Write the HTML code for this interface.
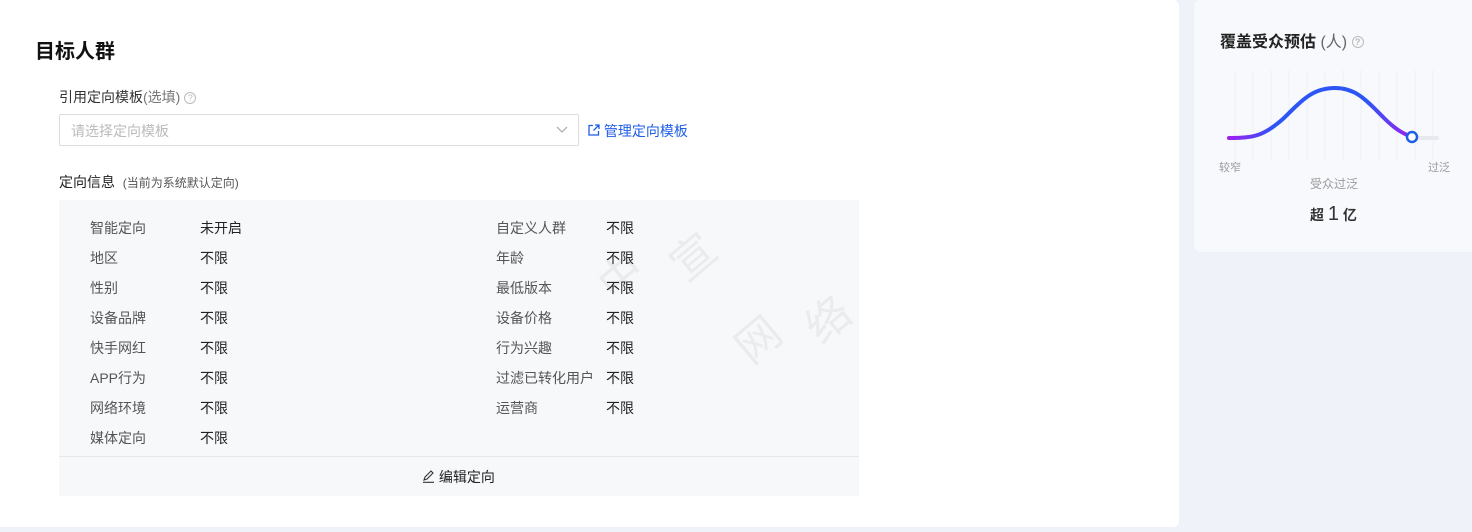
<!DOCTYPE html>
<html><head><meta charset="utf-8"><style>
*{margin:0;padding:0;box-sizing:border-box}
body{width:1472px;height:532px;background:#f0f2fa;font-family:"Liberation Sans","Noto Sans CJK SC",sans-serif;position:relative;overflow:hidden;color:#333}
.main{position:absolute;left:0;top:0;width:1179px;height:527px;background:#fff;border-radius:0 6px 6px 0}
.abs{position:absolute;white-space:nowrap}
.side{position:absolute;left:1194px;top:0;width:278px;height:252px;background:#f8f9fd;border-radius:6px 0 0 6px}
.q{display:inline-block;width:12px;height:12px;border:1px solid #bbb;border-radius:50%;font-size:9px;line-height:10px;text-align:center;color:#bbb;vertical-align:1px}
.box{position:absolute;left:59px;top:200px;width:800px;height:296px;background:#f7f8fa}
.row{position:absolute;font-size:14px;line-height:16px}
.l{color:#555}.v{color:#222}
.wm{position:absolute;font-size:44px;color:rgba(0,0,0,0.05);transform:rotate(-40deg)}
</style></head><body>
<div class="main">
<div class="abs" style="left:35px;top:35px;font-size:20px;font-weight:bold;color:#111">目标人群</div>
<div class="abs" style="left:59px;top:87px;font-size:14px;color:#333">引用定向模板<span style="color:#777">(选填)</span> <span class="q">?</span></div>
<div class="abs" style="left:59px;top:114px;width:520px;height:32px;border:1px solid #ddd;border-radius:2px;font-size:14px;color:#bbb;padding:6px 11px">请选择定向模板
<svg style="position:absolute;right:10px;top:11px" width="12" height="8" viewBox="0 0 12 8"><path d="M1 1l5 5 5-5" fill="none" stroke="#aaa" stroke-width="1.2"/></svg></div>
<div class="abs" style="left:587px;top:121px;font-size:14px;color:#1f5ee8">
<svg width="13" height="13" viewBox="0 0 13 13" style="vertical-align:-1px"><path d="M6 1.5H2v9.5h9.5V7M8 1h4v4M12 1L6.5 6.5" fill="none" stroke="#1f5ee8" stroke-width="1.3"/></svg> 管理定向模板</div>
<div class="abs" style="left:59px;top:172px;font-size:14px;color:#222">定向信息 &nbsp;<span style="font-size:12px;color:#555">(当前为系统默认定向)</span></div>
<div class="box">
<div class="row l" style="left:31px;top:20px">智能定向</div><div class="row v" style="left:141px;top:20px">未开启</div>
<div class="row l" style="left:31px;top:50px">地区</div><div class="row v" style="left:141px;top:50px">不限</div>
<div class="row l" style="left:31px;top:80px">性别</div><div class="row v" style="left:141px;top:80px">不限</div>
<div class="row l" style="left:31px;top:110px">设备品牌</div><div class="row v" style="left:141px;top:110px">不限</div>
<div class="row l" style="left:31px;top:140px">快手网红</div><div class="row v" style="left:141px;top:140px">不限</div>
<div class="row l" style="left:31px;top:170px">APP行为</div><div class="row v" style="left:141px;top:170px">不限</div>
<div class="row l" style="left:31px;top:200px">网络环境</div><div class="row v" style="left:141px;top:200px">不限</div>
<div class="row l" style="left:31px;top:230px">媒体定向</div><div class="row v" style="left:141px;top:230px">不限</div>
<div class="row l" style="left:437px;top:20px">自定义人群</div><div class="row v" style="left:547px;top:20px">不限</div>
<div class="row l" style="left:437px;top:50px">年龄</div><div class="row v" style="left:547px;top:50px">不限</div>
<div class="row l" style="left:437px;top:80px">最低版本</div><div class="row v" style="left:547px;top:80px">不限</div>
<div class="row l" style="left:437px;top:110px">设备价格</div><div class="row v" style="left:547px;top:110px">不限</div>
<div class="row l" style="left:437px;top:140px">行为兴趣</div><div class="row v" style="left:547px;top:140px">不限</div>
<div class="row l" style="left:437px;top:170px">过滤已转化用户</div><div class="row v" style="left:547px;top:170px">不限</div>
<div class="row l" style="left:437px;top:200px">运营商</div><div class="row v" style="left:547px;top:200px">不限</div>
<div class="wm" style="left:538px;top:42px">中</div>
<div class="wm" style="left:610px;top:22px">宣</div>
<div class="wm" style="left:675px;top:105px">网</div>
<div class="wm" style="left:745px;top:85px">络</div>
<div style="position:absolute;left:0;top:256px;width:800px;height:1px;background:#e6e7ea"></div>
<div class="abs" style="left:363px;top:267px;font-size:14px;color:#222">
<svg width="13" height="13" viewBox="0 0 13 13" style="vertical-align:-1px"><path d="M2 10l1-3 6-6 2 2-6 6zM1 12.3h11" fill="none" stroke="#333" stroke-width="1.1"/></svg> 编辑定向</div>
</div>
</div>
<div class="side">
<div class="abs" style="left:26px;top:28px;font-size:16px;font-weight:bold;color:#222">覆盖受众预估 <span style="font-weight:normal;color:#666">(人)</span> <span class="q" style="vertical-align:2px">?</span></div>
<svg class="abs" style="left:0;top:60px" width="278" height="100" viewBox="0 0 278 100">
<defs><linearGradient id="g" x1="0" x2="1"><stop offset="0" stop-color="#a020f0"/><stop offset=".25" stop-color="#2b55f5"/><stop offset=".75" stop-color="#2b55f5"/><stop offset="1" stop-color="#a020f0"/></linearGradient></defs>
<g stroke="#f0f1f6" stroke-width="1"><path d="M41 10v90M59 10v90M77 10v90M95 10v90M113 10v90M131 10v90M149 10v90M167 10v90M185 10v90M203 10v90M221 10v90M239 10v90"/></g>
<path d="M218 78H243" stroke="#e8e9ee" stroke-width="4" stroke-linecap="round"/>
<path d="M35 78C60 78 70 76 90 58C110 38 120 28 141 28C162 28 172 40 190 58C202 70 210 74 218 77" fill="none" stroke="url(#g)" stroke-width="4" stroke-linecap="round"/>
<circle cx="218" cy="77" r="5" fill="#fff" stroke="#1f5ee8" stroke-width="2.5"/>
</svg>
<div class="abs" style="left:25px;top:159px;font-size:11px;color:#999">较窄</div>
<div class="abs" style="left:234px;top:159px;font-size:11px;color:#999">过泛</div>
<div class="abs" style="left:116px;top:175px;font-size:12px;color:#999">受众过泛</div>
<div class="abs" style="left:116px;top:203px;font-size:14px;font-weight:bold;color:#333">超 <span style="font-size:20px;font-weight:normal">1</span> 亿</div>
</div>
</body></html>
